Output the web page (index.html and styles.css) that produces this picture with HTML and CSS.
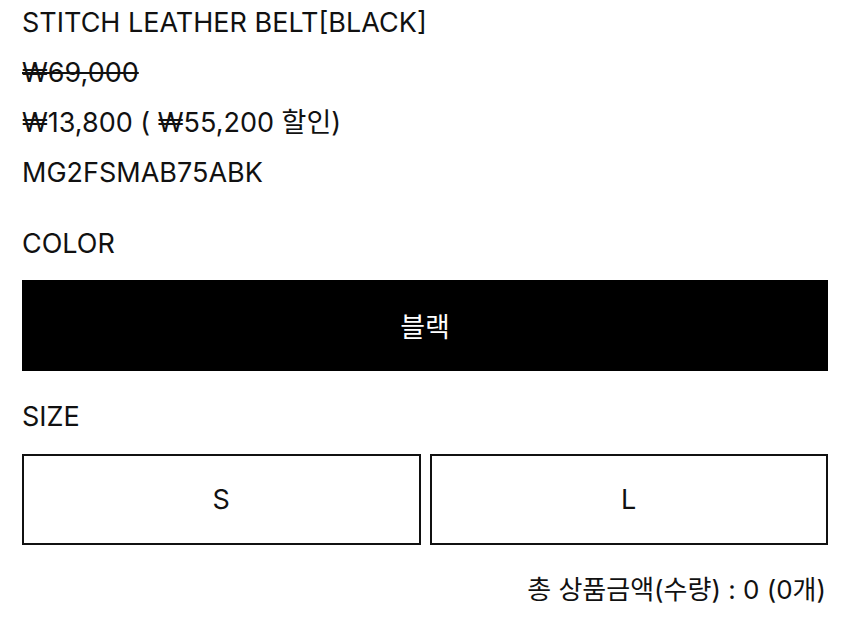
FILE: index.html
```html
<!DOCTYPE html>
<html lang="ko">
<head>
<meta charset="utf-8">
<link rel="stylesheet" href="styles.css">
</head>
<body>
<div class="page">
  <div class="info">
    <div class="line">STITCH LEATHER BELT[BLACK]</div>
    <div class="line"><span class="strike">₩69,000</span></div>
    <div class="line">₩13,800 ( ₩55,200 할인)</div>
    <div class="line">MG2FSMAB75ABK</div>
  </div>
  <div class="label color-label">COLOR</div>
  <div class="opt-row">
    <div class="opt selected">블랙</div>
  </div>
  <div class="label size-label">SIZE</div>
  <div class="opt-row size-row">
    <div class="opt">S</div>
    <div class="opt">L</div>
  </div>
  <div class="total">총 상품금액(수량) : 0 (0개)</div>
</div>
</body>
</html>
```
FILE: styles.css
```css
html, body {
  margin: 0;
  padding: 0;
  background: #fff;
}
body {
  font-family: Inter, "Noto Sans CJK KR", sans-serif;
  color: #111;
  font-size: 27px;
}
.page {
  padding: 0 22px;
}
.info {
  margin-top: -2px;
}
.line {
  height: 50px;
  line-height: 50px;
  white-space: nowrap;
}
.strike {
  text-decoration: line-through;
  text-decoration-thickness: 2px;
}
.label {
  line-height: 30px;
}
.color-label {
  margin-top: 31px;
}
.opt-row {
  display: flex;
  gap: 9px;
  margin-top: 21px;
}
.size-row {
  margin-top: 22px;
}
.opt {
  flex: 1;
  height: 91px;
  box-sizing: border-box;
  border: 2px solid #111;
  display: flex;
  align-items: center;
  justify-content: center;
}
.opt.selected {
  background: #000;
  border-color: #000;
  color: #fff;
}
.size-label {
  margin-top: 31px;
}
.total {
  text-align: right;
  margin-top: 24px;
  padding-right: 2px;
  font-size: 26px;
}
```
